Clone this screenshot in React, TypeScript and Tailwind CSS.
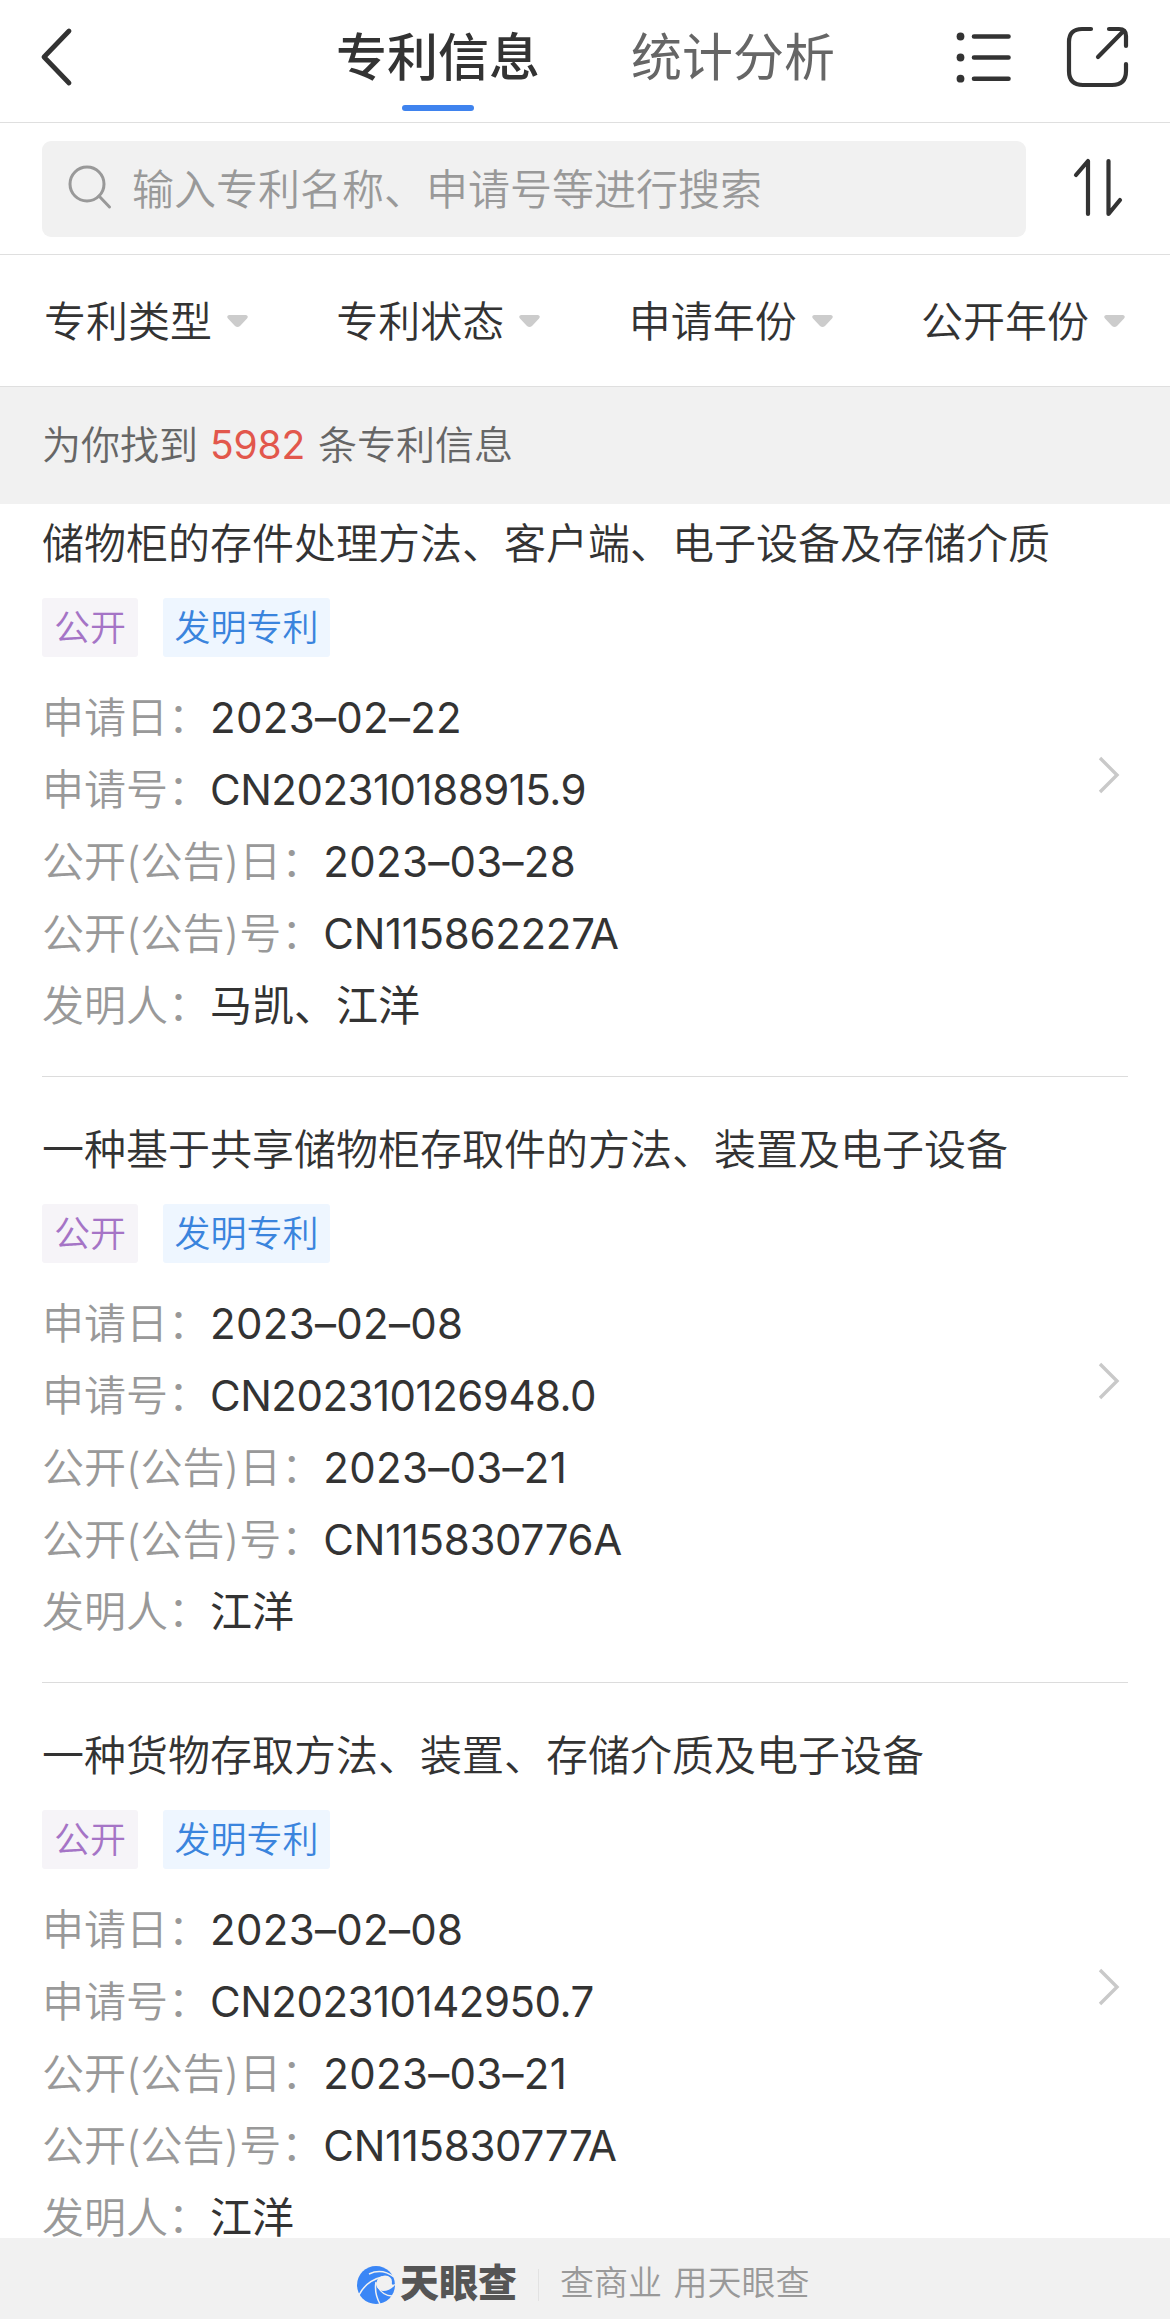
import React from 'react';

const filters = ['专利类型', '专利状态', '申请年份', '公开年份'];

const patents = [
  {
    title: '储物柜的存件处理方法、客户端、电子设备及存储介质',
    applyDate: '2023–02–22',
    applyNo: 'CN202310188915.9',
    publicDate: '2023–03–28',
    publicNo: 'CN115862227A',
    inventors: '马凯、江洋',
  },
  {
    title: '一种基于共享储物柜存取件的方法、装置及电子设备',
    applyDate: '2023–02–08',
    applyNo: 'CN202310126948.0',
    publicDate: '2023–03–21',
    publicNo: 'CN115830776A',
    inventors: '江洋',
  },
  {
    title: '一种货物存取方法、装置、存储介质及电子设备',
    applyDate: '2023–02–08',
    applyNo: 'CN202310142950.7',
    publicDate: '2023–03–21',
    publicNo: 'CN115830777A',
    inventors: '江洋',
  },
];

const Row: React.FC<{ label: string; value: string; tracking?: string }> = ({ label, value, tracking = '' }) => (
  <div className="flex h-[72px] items-center whitespace-nowrap leading-[40px]">
    <span className="text-[#999]">{label}：</span>
    <span className={`font-[385] text-[#333] ${tracking}`}>{value}</span>
  </div>
);

const PatentItem: React.FC<{ patent: (typeof patents)[number] }> = ({ patent }) => (
  <article className="mx-[42px] h-[606px] shrink-0 border-b border-[#dcdcdc] pt-[41px] text-[42px] text-[#333]">
    <h2 className="h-[64px] whitespace-nowrap leading-[64px]">{patent.title}</h2>
    <div className="mt-[22px] flex gap-[25px] text-[36px] leading-[60px]">
      <span className="h-[59px] w-[96px] rounded-[3px] bg-[#f6f4f8] text-center text-[#a574c6]">公开</span>
      <span className="h-[59px] w-[167px] rounded-[3px] bg-[#eef6ff] text-center text-[#3a84dd]">发明专利</span>
    </div>
    <div className="mt-[25px] flex items-start justify-between">
      <div>
        <Row label="申请日" value={patent.applyDate} tracking="tracking-[0.3px]" />
        <Row label="申请号" value={patent.applyNo} tracking="tracking-[-0.5px]" />
        <Row label="公开(公告)日" value={patent.publicDate} tracking="tracking-[0.3px]" />
        <Row label="公开(公告)号" value={patent.publicNo} tracking="tracking-[-0.3px]" />
        <Row label="发明人" value={patent.inventors} />
      </div>
      <svg className="mt-[74px] mr-[7px] h-[38px] w-[24px]" viewBox="0 0 24 38" fill="none" stroke="#c9c9c9" strokeWidth="3.4">
        <path d="M3 2 L20 19 L3 36" />
      </svg>
    </div>
  </article>
);

const App: React.FC = () => {
  return (
    <div className="flex h-[2319px] w-[1170px] flex-col overflow-hidden bg-white font-['Inter','Noto_Sans_CJK_SC',sans-serif] font-[350]">
      {/* Top bar */}
      <header className="flex h-[123px] shrink-0 border-b border-[#dfdfdf]">
        <svg className="mt-[27px] ml-[39px] h-[60px] w-[34px]" viewBox="0 0 34 60" fill="none" stroke="#333" strokeWidth="4.8" strokeLinecap="round" strokeLinejoin="round">
          <path d="M30 4 L5 30 L30 56" />
        </svg>
        <nav className="ml-[263px] flex gap-[91px] text-[51px] leading-[116px]">
          <div className="flex h-[111px] w-[204px] flex-col items-center">
            <span className="h-[105px] font-medium text-[#333]">专利信息</span>
            <span className="h-[6px] w-[72px] shrink-0 rounded-full bg-[#3f83ee]" />
          </div>
          <span className="h-[105px] font-normal text-[#666]">统计分析</span>
        </nav>
        <svg className="mt-[30px] ml-[119px] h-[55px] w-[58px]" viewBox="0 0 58 55" fill="none" stroke="#333" strokeWidth="4.6" strokeLinecap="round">
          <path d="M20 6.5 H54.5 M20 27.5 H54.5 M20 48.7 H54.5" />
          <g fill="#333" stroke="none">
            <circle cx="6.5" cy="6.5" r="3.9" />
            <circle cx="6.5" cy="27.5" r="3.9" />
            <circle cx="6.5" cy="48.7" r="3.9" />
          </g>
        </svg>
        <svg className="mt-[25px] ml-[53px] h-[64px] w-[64px]" viewBox="0 0 64 64" fill="none" stroke="#333" strokeWidth="4.2" strokeLinecap="round" strokeLinejoin="round">
          <path d="M26 4 H17 Q4 4 4 17 V46 Q4 60 18 60 H47 Q61 60 61 46 V39 M44 4 H54 Q61 4 61 11 V21 M58 6.5 L33 32" />
        </svg>
      </header>

      {/* Search */}
      <div className="flex h-[132px] shrink-0 items-start border-b border-[#dfdfdf] pt-[18px] pl-[42px]">
        <div className="flex h-[96px] w-[984px] items-center rounded-[9px] bg-[#f1f1f1] pl-[25px]">
          <svg className="mt-[-4px] h-[46px] w-[46px]" viewBox="0 0 46 46" fill="none" stroke="#999" strokeWidth="3" strokeLinecap="round">
            <circle cx="20" cy="20" r="17" />
            <path d="M32 32 L42.5 43" />
          </svg>
          <span className="ml-[19px] pt-[2px] text-[42px] leading-[64px] text-[#999]">输入专利名称、申请号等进行搜索</span>
        </div>
        <svg className="mt-[16px] ml-[45px] h-[62px] w-[54px]" viewBox="0 0 54 62" fill="none" stroke="#333" strokeWidth="4.2" strokeLinecap="round" strokeLinejoin="round">
          <path d="M5 18 L17 4 V57 M37.5 4 V57 L49 43" />
        </svg>
      </div>

      {/* Filters */}
      <div className="flex h-[132px] shrink-0 items-center justify-between border-b border-[#dfdfdf] pt-[3px] pr-[45px] pl-[44px] text-[42px] leading-[64px] text-[#333]">
        {filters.map((name) => (
          <div key={name} className="flex items-center">
            {name}
            <svg className="mt-[-2px] ml-[15px] h-[12px] w-[21px]" viewBox="0 0 21 12" fill="#ccc">
              <path d="M2 0 H19 Q22 1 20 3.5 L13 11 Q10.5 13 8 11 L1 3.5 Q-1 1 2 0 Z" />
            </svg>
          </div>
        ))}
      </div>

      <div className="h-[117px] shrink-0 bg-[#f1f1f1] pl-[42px] text-[39px] leading-[116px] text-[#666]">
        为你找到<span className="mr-[13px] ml-[12px] font-[385] tracking-[-0.2px] text-[#e2574c]">5982</span>条专利信息
      </div>

      {/* Patent list */}
      <main className="flex min-h-0 flex-1 flex-col overflow-hidden">
        <div className="-mt-[33px]">
          {patents.map((patent) => (
            <PatentItem key={patent.applyNo} patent={patent} />
          ))}
        </div>
      </main>

      <footer className="flex h-[81px] shrink-0 items-center bg-[#f1f1f1] pl-[357px] leading-[60px]">
        <svg className="mt-[13px] h-[38px] w-[38px]" viewBox="0 0 38 38">
          <circle cx="19" cy="19" r="19" fill="#3a86f6" />
          <path d="M19 18 Q20 10 28 9.500 Q35 10 35 16 Q34 20 38 18 V19 Q33 25 26 25 Q20 24 19 18 Z" fill="#f1f1f1" />
          <g fill="none" stroke="#f1f1f1" strokeWidth="1.5">
            <path d="M12 8 Q25 2 37 11" />
            <path d="M2 29 Q9 15 25 11" />
            <path d="M19 16 Q17 27 23 38" />
            <path d="M21 21 Q26 30 35 30" />
          </g>
        </svg>
        <span className="mt-[8px] ml-[5px] text-[39px] font-black text-[#555]">天眼查</span>
        <span className="mt-[12px] ml-[21px] h-[32px] w-px bg-[#e2e2e2]" />
        <span className="mt-[8px] ml-[21px] text-[34px] text-[#999] [word-spacing:2px]">查商业 用天眼查</span>
      </footer>
    </div>
  );
};

export default App;
